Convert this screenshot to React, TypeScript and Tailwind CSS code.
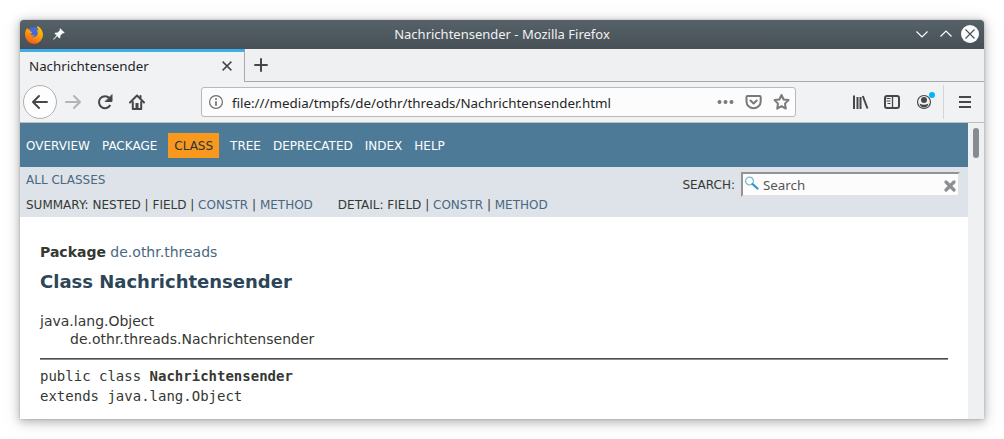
import React from "react";

const navItems = ["OVERVIEW", "PACKAGE", "CLASS", "TREE", "DEPRECATED", "INDEX", "HELP"];

function FirefoxLogo() {
  return (
    <svg className="h-[18px] w-[18px]" viewBox="0 0 18 18">
      <defs>
        <linearGradient id="fox" x1="0.8" y1="0" x2="0.3" y2="1">
          <stop offset="0" stopColor="#ffcb00" />
          <stop offset="0.5" stopColor="#ff9b0a" />
          <stop offset="1" stopColor="#f2541b" />
        </linearGradient>
      </defs>
      <circle cx="9" cy="8.2" r="7.3" fill="#4668d8" />
      <path d="M1.4 3.2 2.1 1.8 3.5 3.8 5.1 3.5C4.5 5 5.1 5.6 7.2 5.9 7.2 7 5.7 7.3 5.4 8.4 6 9.4 8 8.900 9.800 9.400 8.800 10.700 7.100 10.500 6.200 10.700 9 12.300 12.600 10.300 12.800 7.600 13 5.600 11.800 4.300 11.200 3.800 12.500 3.800 13.500 4.900 13.700 5.300 13.600 3.100 12.400 2.100 11.800 1L12.400.2C15.800 1.500 18 5 18 9A9 9 0 0 1 0 9C0 6.500.3 4.800 1.400 3.200Z" fill="url(#fox)" />
    </svg>
  );
}

function Pin() {
  return (
    <svg className="-mt-px h-3 w-3" viewBox="0 0 12 12" fill="#fcfcfc" stroke="#fcfcfc" strokeWidth="0.300">
      <path d="M7.200.5 11.500 4.800 10.600 5.200 9.800 5 7.200 7.500 7.300 9.300 6.300 10.200 4.200 8.100.8 11.600.3 11.200 3.700 7.600 1.700 5.600 2.700 4.700 4.500 4.800 7 2.200 6.700 1.200Z" />
    </svg>
  );
}

function TitleBar() {
  return (
    <div className="relative flex h-[29px] shrink-0 items-center justify-between rounded-t-[3px] bg-linear-to-b from-[#566168] to-[#475057] px-[5px]">
      <div className="flex items-center gap-[10px]">
        <FirefoxLogo />
        <Pin />
      </div>
      <span className="absolute inset-x-0 text-center font-['Noto_Sans',sans-serif] text-[13px] leading-[29px] text-[#eff0f1]">
        Nachrichtensender - Mozilla Firefox
      </span>
      <svg className="h-[18px] w-[64px] -mt-px" viewBox="0 0 64 18" fill="none" stroke="#fcfcfc" strokeWidth="1.2">
        <path d="M1.500 6.500 7 12l5.500-5.500M25.500 11.500 31 6l5.500 5.500" />
        <circle cx="55" cy="9" r="9" fill="#fcfcfc" stroke="none" />
        <path d="m50.500 4.500 9 9m0-9-9 9" stroke="#4b545a" />
      </svg>
    </div>
  );
}

function TabBar() {
  return (
    <div className="flex h-[33px] shrink-0 bg-[#eff0f1]">
      <div className="flex w-[225px] items-start justify-between border-t-[3px] border-r border-t-[#3daee9] border-r-[#a7a9aa] bg-[#f1f2f4] pl-[9px] pr-[12px]">
        <span className="font-['Noto_Sans',sans-serif] text-[13.33px] leading-[28px] text-[#232627]">Nachrichtensender</span>
        <svg className="mt-[9px] h-[10px] w-[10px]" viewBox="0 0 10 10" stroke="#454749" strokeWidth="1.5">
          <path d="m.6.6 8.800 8.800m0-8.800L.6 9.400" />
        </svg>
      </div>
      <div className="flex-1 border-b border-[#a7a9aa] pl-[9px] pt-[9px]">
        <svg className="h-[14px] w-[14px]" viewBox="0 0 14 14" stroke="#454749" strokeWidth="2">
          <path d="M7 .3v13.400M.3 7h13.400" />
        </svg>
      </div>
    </div>
  );
}

function Toolbar() {
  return (
    <div className="flex h-[41px] shrink-0 items-start border-b border-[#bcbebf] bg-[#f1f2f4]">
      <svg className="mt-[2px] h-9 w-[140px]" viewBox="0 0 140 36" fill="none" stroke="#454749" strokeWidth="2" strokeLinecap="round" strokeLinejoin="round">
        <circle cx="20" cy="18" r="16.500" fill="#fdfdfd" stroke="#adafb0" strokeWidth="1" />
        <path d="M27 18H13.200m5.800-6-6 6 6 6" />
        <path d="M46 18h13.800M54 12l6 6-6 6" stroke="#b2b4b6" />
        <path d="M89.500 14.200A6 6 0 1 0 90.300 21" strokeLinecap="butt" />
        <path d="M92 11v6.500h-6.500z" fill="#454749" strokeWidth="1" />
        <path d="m110 18.500 7-7 7 7" />
        <path d="M112.800 18v7h8.400v-7M120.500 12v2" />
        <path d="M115.500 19h3v5.500h-3z" fill="#454749" stroke="none" />
      </svg>
      <div className="ml-[41px] mt-[5px] flex h-[30px] w-[595px] items-center rounded-[3px] border border-[#b7b9ba] bg-[#fcfcfc] pl-[7px] pr-[5px]">
        <svg className="h-[14px] w-[14px]" viewBox="0 0 14 14" fill="none" stroke="#6d6f71">
          <circle cx="7" cy="7" r="6.400" strokeWidth="1.200" />
          <path d="M7 6.200v4.500M7 3.300v1.700" strokeWidth="1.700" />
        </svg>
        <span className="ml-[9px] flex-1 whitespace-nowrap pt-[2px] font-['Noto_Sans',sans-serif] text-[13.36px] leading-[26px] text-[#232627]">
          file:///media/tmpfs/de/othr/threads/Nachrichtensender.html
        </span>
        <svg className="h-[18px] w-[73px]" viewBox="0 0 73 18" fill="none" stroke="#77797b" strokeWidth="2" strokeLinejoin="round" strokeLinecap="round">
          <g fill="#77797b" stroke="none">
            <circle cx="2.500" cy="9" r="2" /><circle cx="8.500" cy="9" r="2" /><circle cx="14.500" cy="9" r="2" />
          </g>
          <path d="M30.500 3h12.200q1 0 1 1v4.500a7.100 6.800 0 0 1-14.200 0V4q0-1 1-1Z" />
          <path d="m33.500 7.500 3.100 3 3.100-3" />
          <path d="m64.500 2 2.100 4.500 4.900.6-3.500 3.500.8 5-4.300-2.400-4.300 2.400.8-5L57.500 7.100l4.900-.6Z" />
        </svg>
      </div>
      <svg className="ml-[55px] mt-[3px] h-[34px] w-[113px]" viewBox="0 0 113 34" fill="none" stroke="#454749" strokeWidth="2">
        <path d="M3 10.500v13.500M6.500 12v12M9.500 12v12M11.800 11l4.700 12.500" />
        <rect x="34" y="11" width="14" height="12" rx="2" />
        <path d="M41.500 11v12" strokeWidth="1.300" />
        <path d="M35.500 13.500h4m-4 2.500h4m-3 2.500h3" strokeWidth="1" />
        <circle cx="73" cy="17" r="6.500" strokeWidth="1.200" />
        <circle cx="73" cy="15" r="3" fill="#454749" stroke="none" />
        <path d="M68.500 18.500q4.500 2.500 9 0-1 4-4.500 4t-4.500-4" fill="#454749" stroke="none" />
        <circle cx="81" cy="10" r="3" fill="#00b3ff" stroke="none" />
        <path d="M92.500 0v34" stroke="#d2d4d6" strokeWidth="1" />
      </svg>
      <svg className="-ml-[5px] mt-[13px] h-[14px] w-3" viewBox="0 0 12 14" stroke="#454749" strokeWidth="2">
        <path d="M0 2h12M0 7h12M0 12h12" />
      </svg>
    </div>
  );
}

function SearchBox() {
  return (
    <div className="mt-[5px] flex items-start self-start text-[#353833]">
      <span className="mr-[6px] pt-px text-[12px] leading-[25px]">SEARCH:</span>
      <div className="flex h-[25px] w-[219px] items-center border-2 border-b-[#e2e2e0] border-l-[#929492] border-r-[#e2e2e0] border-t-[#929492] bg-[#fcfcfc] pl-[2px] pr-[2px]">
        <svg className="-mt-[3px] h-[14px] w-[14px]" viewBox="0 0 14 14" fill="none">
          <circle cx="4.500" cy="5" r="3.900" stroke="#75bed0" strokeWidth="1.300" />
          <path d="m7.500 8 5 4.600" stroke="#2c91c5" strokeWidth="2" strokeLinecap="round" />
        </svg>
        <span className="ml-[4px] flex-1 font-['Noto_Sans',sans-serif] text-[13.33px] leading-5 text-[#555]">Search</span>
        <svg className="mt-[3px] h-3 w-3" viewBox="0 0 12 12" stroke="#8b8f92" strokeWidth="3.200" strokeLinecap="round">
          <path d="m2 2 8 8m0-8-8 8" />
        </svg>
      </div>
    </div>
  );
}

function Page() {
  return (
    <div className="flex w-[948px] flex-col bg-white font-['DejaVu_Sans',sans-serif] text-[14px] text-[#353833]">
      <nav className="flex h-11 items-center bg-[#4d7a97] text-[12px] text-white">
        {navItems.map((item) =>
          item === "CLASS" ? (
            <span key={item} className="mx-[5px] bg-[#f8981d] px-[6px] pb-[4px] pt-[6px] leading-[15px] text-[#253441]">{item}</span>
          ) : (
            <span key={item} className="px-[6px] pt-[2px] leading-[15px]">{item}</span>
          )
        )}
      </nav>
      <div className="flex h-[50px] justify-between bg-[#dee3e9] pl-[6px] pr-[8px] text-[12px]">
        <div className="flex flex-col">
          <span className="mt-[6px] leading-[15px] text-[#4a6782]">ALL CLASSES</span>
          <div className="mt-[10px] flex gap-[25px] whitespace-pre leading-[15px]">
            <span>SUMMARY: NESTED | FIELD | <span className="text-[#4a6782]">CONSTR</span> | <span className="text-[#4a6782]">METHOD</span></span>
            <span>DETAIL: FIELD | <span className="text-[#4a6782]">CONSTR</span> | <span className="text-[#4a6782]">METHOD</span></span>
          </div>
        </div>
        <SearchBox />
      </div>
      <main className="px-5 pt-[26px]">
        <div className="leading-[18px]"><b>Package</b> <span className="text-[#4a6782]">de.othr.threads</span></div>
        <h1 className="mt-[10px] text-[18px] font-bold leading-[22px] text-[#2c4557]">Class Nachrichtensender</h1>
        <div className="mt-[19px] leading-[18px]">
          <div>java.lang.Object</div>
          <div className="pl-[30px]">de.othr.threads.Nachrichtensender</div>
        </div>
        <div className="mt-[10px] h-[2px] border-t border-[#4d4d4d] bg-[#8d8d8d]" />
        <pre className="mt-[6px] font-['DejaVu_Sans_Mono',monospace] text-[14px] leading-5">
          public class <b>Nachrichtensender</b>{"\n"}extends java.lang.Object
        </pre>
      </main>
    </div>
  );
}

export default function App() {
  return (
    <div className="h-[439px] w-[1004px] overflow-hidden bg-white p-5">
      <div className="flex h-[399px] w-[964px] flex-col overflow-hidden rounded-t-[3px] shadow-[0_0_2px_rgba(0,0,0,0.25),0_2px_10px_1px_rgba(0,0,0,0.26),0_3px_24px_rgba(0,0,0,0.08)]">
        <TitleBar />
        <TabBar />
        <Toolbar />
        <div className="flex min-h-0 flex-1">
          <Page />
          <div className="flex-1 bg-[#eff0f1] pl-[5px] pt-[5px]">
            <div className="h-[30px] w-[6px] rounded-full bg-[#898c8e]" />
          </div>
        </div>
      </div>
    </div>
  );
}
